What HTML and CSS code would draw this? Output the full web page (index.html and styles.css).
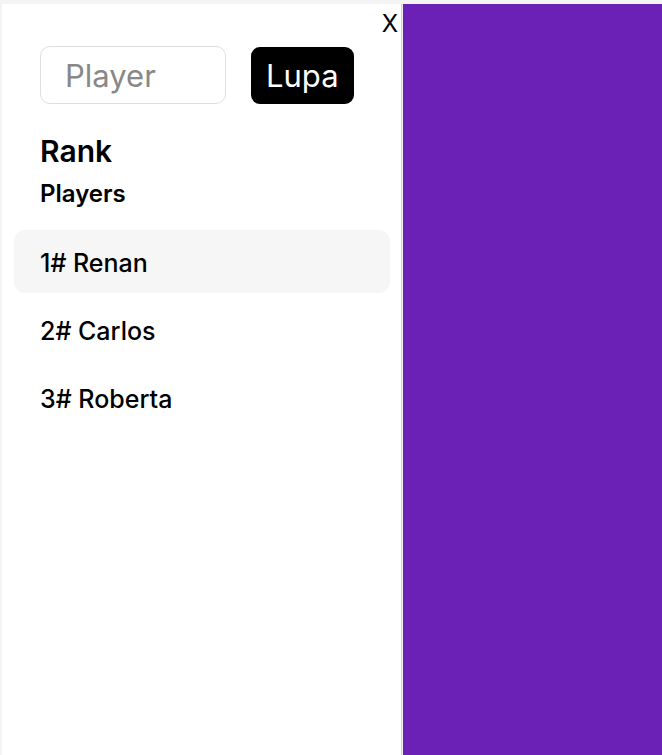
FILE: index.html
```html
<!DOCTYPE html>
<html lang="pt">
<head>
<meta charset="utf-8">
<title>Rank</title>
<link rel="stylesheet" href="styles.css">
</head>
<body>
<div class="layout">
  <aside class="sidebar">
    <button class="close">X</button>
    <div class="search">
      <input class="search-input" type="text" placeholder="Player">
      <button class="search-btn">Lupa</button>
    </div>
    <h1 class="title">Rank</h1>
    <h2 class="subtitle">Players</h2>
    <ul class="list">
      <li class="item active">1# Renan</li>
      <li class="item">2# Carlos</li>
      <li class="item">3# Roberta</li>
    </ul>
  </aside>
  <main class="content"></main>
</div>
</body>
</html>
```
FILE: styles.css
```css
* { box-sizing: border-box; }
html, body { height: 100%; }
body {
  margin: 0;
  background: #f4f4f4;
  font-family: Inter, "Noto Sans", sans-serif;
  color: #000;
}
.layout {
  display: flex;
  height: 100%;
  padding: 4px 0 0 2px;
}
.sidebar {
  position: relative;
  width: 400px;
  flex: none;
  background: #fff;
  border-right: 1px solid #d4d4d4;
  padding: 42px 11px 0 12px;
}
.close {
  position: absolute;
  top: 6px;
  right: 1px;
  border: 0;
  background: transparent;
  font-family: inherit;
  font-size: 24px;
  line-height: 1.2;
  padding: 0 2px;
  color: #000;
}
.search {
  display: flex;
  align-items: center;
  gap: 25px;
  padding-left: 26px;
}
.search-input {
  width: 186px;
  height: 58px;
  border: 1px solid #dedede;
  border-radius: 10px;
  padding: 0 0 0 24px;
  font-family: inherit;
  font-size: 31px;
  outline: none;
}
.search-input::placeholder { color: #888; }
.search-btn {
  height: 57px;
  border: 0;
  border-radius: 9px;
  background: #000;
  color: #fff;
  font-family: inherit;
  font-size: 31px;
  padding: 0 15px;
}
.title {
  margin: 29px 0 0 26px;
  font-size: 30px;
  font-weight: 600;
  line-height: 1.2;
}
.subtitle {
  margin: 11px 0 0 26px;
  font-size: 24px;
  font-weight: 600;
  line-height: 1.2;
}
.list {
  list-style: none;
  margin: 21px 0 0;
  padding: 0;
  display: flex;
  flex-direction: column;
  gap: 5px;
}
.item {
  height: 63px;
  display: flex;
  align-items: center;
  padding: 3px 0 0 26px;
  border-radius: 11px;
  font-size: 25px;
  font-weight: 500;
}
.item.active { background: #f6f6f6; }
.content {
  flex: 1;
  background: #6b21b5;
  border-left: 1px solid #ececec;
}
```
